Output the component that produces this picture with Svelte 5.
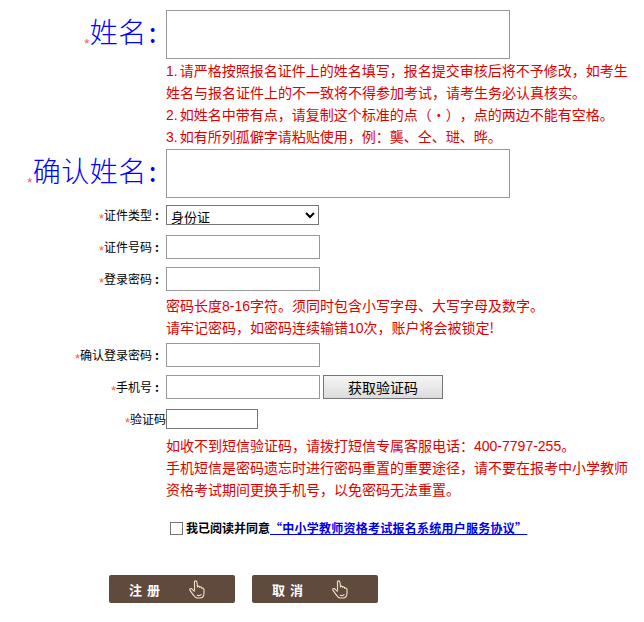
<script>
  let agreed = false;
</script>

<div class="page">
  <div class="row big">
    <label class="lab"><span class="star">*</span>姓名<span class="colon">:</span></label>
    <textarea class="namebox"></textarea>
  </div>
  <div class="notes first">
    <p><span class="num lead">1.</span>请严格按照报名证件上的姓名填写，报名提交审核后将不予修改，如考生姓名与报名证件上的不一致将不得参加考试，请考生务必认真核实。</p>
    <p><span class="num lead">2.</span>如姓名中带有点，请复制这个标准的点（<span class="dot">·</span>），点的两边不能有空格。</p>
    <p><span class="num lead">3.</span>如有所列孤僻字请粘贴使用，例：龑、仝、琎、晔。</p>
  </div>
  <div class="row big">
    <label class="lab"><span class="star">*</span>确认姓名<span class="colon">:</span></label>
    <textarea class="namebox"></textarea>
  </div>

  <div class="row sel">
    <label class="lab small"><span class="star">*</span>证件类型<span class="colon">:</span></label>
    <select><option>身份证</option></select>
  </div>
  <div class="row r2">
    <label class="lab small"><span class="star">*</span>证件号码<span class="colon">:</span></label>
    <input type="text" />
  </div>
  <div class="row r3">
    <label class="lab small"><span class="star">*</span>登录密码<span class="colon">:</span></label>
    <input type="password" />
  </div>
  <div class="notes pw">
    <p>密码长度<span class="num">8-16</span>字符。须同时包含小写字母、大写字母及数字。</p>
    <p>请牢记密码，如密码连续输错<span class="num">10</span>次，账户将会被锁定!</p>
  </div>
  <div class="row r4">
    <label class="lab small"><span class="star">*</span>确认登录密码<span class="colon">:</span></label>
    <input type="password" />
  </div>
  <div class="row r3">
    <label class="lab small"><span class="star">*</span>手机号<span class="colon">:</span></label>
    <input type="text" />
    <button class="getcode">获取验证码</button>
  </div>
  <div class="row r5">
    <label class="lab small tight"><span class="star">*</span>验证码</label>
    <input class="code" type="text" />
  </div>
  <div class="notes sms">
    <p>如收不到短信验证码，请拨打短信专属客服电话：<span class="num">400-7797-255</span>。</p>
    <p>手机短信是密码遗忘时进行密码重置的重要途径，请不要在报考中小学教师资格考试期间更换手机号，以免密码无法重置。</p>
  </div>

  <div class="agree">
    <input type="checkbox" bind:checked={agreed} />
    <span>我已阅读并同意<a href="#top">“中小学教师资格考试报名系统用户服务协议”</a></span>
  </div>

  <div class="actions">
    {#each ["注 册", "取 消"] as txt}
      <button class="brown">
        <span>{txt}</span>
        <svg width="16" height="19" viewBox="0 0 16 19" fill="none" stroke="#f5e3c8" stroke-width="1.1">
          <path d="M5.6 10.6 L5.4 2 C5.4 .6 7.6 .4 7.9 2 L8.4 6.6 C9 5.8 10.4 6 10.7 7.2 C11.4 6.6 12.6 7 12.8 8.2 C13.6 7.8 14.9 8.2 15 9.6 L15 13 C15 15.8 13.4 18 11 18 L8 18 C6.4 18 5.6 17 4.8 15.6 L1 10.4 C.2 9 1.8 8 2.8 8.8 L5.6 11.6"/>
          <path d="M8 14.8 C9 16 11 15.8 12.4 14.4"/>
        </svg>
      </button>
    {/each}
  </div>
</div>

<style>
  :global(body) {
    margin: 0;
    background: #fff;
  }
  .page {
    width: 644px;
    height: 622px;
    padding-top: 10px;
    box-sizing: border-box;
    overflow: hidden;
    font-family: "Noto Sans CJK SC", "Liberation Sans", sans-serif;
    font-size: 12px;
    color: #000;
  }
  .row {
    display: flex;
    align-items: center;
  }
  .lab {
    width: 166px;
    flex: none;
    text-align: right;
    box-sizing: border-box;
    padding-right: 8px;
    white-space: nowrap;
  }
  .big {
    height: 49px;
  }
  .big .lab {
    font-size: 28px;
    line-height: 49px;
    color: #0000ff;
    font-weight: 300;
    padding-right: 9px;
    padding-top: 1px;
    letter-spacing: 0.5px;
  }
  .small {
    padding-right: 7px;
    font-size: 12px;
    line-height: 16px;
  }
  .tight {
    padding-right: 0;
  }
  .star {
    font-family: "Liberation Sans", sans-serif;
    color: #ff5050;
    font-size: 13px;
    font-weight: 400;
    position: relative;
    top: 3px;
  }
  .big .star {
    top: 5px;
  }
  .colon {
    margin-left: 3px;
    font-weight: 700;
  }
  .big .colon {
    margin-left: 2px;
    font-weight: 400;
  }
  .namebox {
    width: 344px;
    height: 49px;
    box-sizing: border-box;
    border: 1px solid #999;
    margin: 0;
    padding: 0;
    resize: none;
    outline: none;
  }
  input[type="text"],
  input[type="password"] {
    width: 154px;
    height: 24px;
    box-sizing: border-box;
    border: 1px solid #999;
    margin: 0;
    padding: 0 2px;
  }
  input.code {
    width: 92px;
    height: 20px;
    border-color: #767676;
  }
  select {
    width: 153px;
    height: 20px;
    box-sizing: border-box;
    margin: 0;
    border: 1px solid #767676;
    background: #fff;
    font-family: inherit;
    font-size: 13px;
    line-height: 16px;
    padding: 0;
  }
  .notes {
    margin-left: 166px;
    width: 464px;
    color: #e00000;
    font-size: 14px;
    line-height: 22px;
    text-spacing-trim: space-all;
  }
  .notes p {
    margin: 0;
  }
  .num {
    font-family: "Liberation Sans", sans-serif;
    line-height: 1;
  }
  .lead {
    margin-right: 2px;
  }
  .dot {
    display: inline-block;
    width: 14px;
    line-height: 1;
    text-align: center;
  }
  .first {
    margin-bottom: 2px;
  }
  .sel {
    margin-top: 7px;
  }
  .r2 {
    margin-top: 10px;
  }
  .r3 {
    margin-top: 8px;
  }
  .r4 {
    margin-top: 5px;
  }
  .r5 {
    margin-top: 10px;
  }
  .pw {
    margin-top: 3px;
  }
  .sms {
    margin-top: 5px;
  }
  .getcode {
    width: 120px;
    height: 24px;
    margin: 0 0 0 3px;
    padding: 0;
    border: 1px solid #767676;
    background: linear-gradient(#f6f6f6, #dcdcdc);
    font-family: inherit;
    font-size: 14px;
    color: #000;
  }
  .agree {
    display: flex;
    align-items: center;
    height: 16px;
    margin: 20px 0 0 170px;
    font-size: 12px;
    font-weight: 700;
    line-height: 16px;
  }
  .agree input {
    appearance: none;
    width: 13px;
    height: 13px;
    box-sizing: border-box;
    border: 1px solid #767676;
    background: #fff;
    margin: 0 3px 0 0;
  }
  .agree a {
    color: #0000ee;
    text-decoration: underline;
    letter-spacing: 0.25px;
  }
  .actions {
    display: flex;
    gap: 17px;
    margin: 39px 0 0 109px;
  }
  .brown {
    width: 126px;
    height: 28px;
    box-sizing: border-box;
    padding: 0 30px 0 20px;
    display: flex;
    align-items: center;
    justify-content: space-between;
    border: none;
    border-radius: 2px;
    background: #5f4a3d;
    color: #fff;
    font-family: inherit;
    font-size: 13px;
    font-weight: 700;
  }
  .brown span {
    letter-spacing: 1px;
  }
</style>
